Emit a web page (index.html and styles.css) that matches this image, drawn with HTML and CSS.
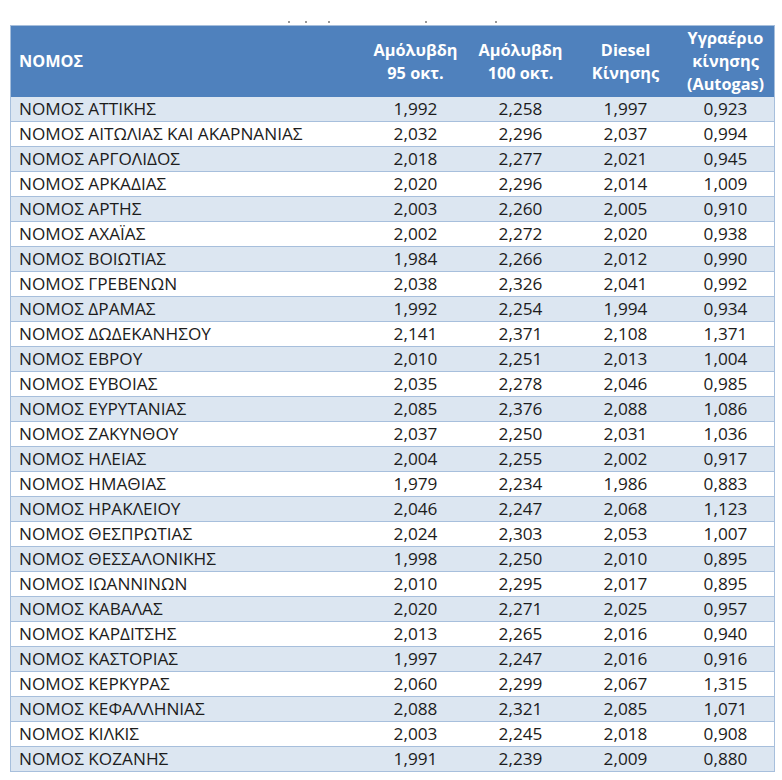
FILE: index.html
```html
<!DOCTYPE html>
<html lang="el">
<head>
<meta charset="utf-8">
<title>Τιμές καυσίμων ανά νομό</title>
<link rel="stylesheet" href="styles.css">
</head>
<body>
<div class="page">
  <div class="specks"><span class="s1"></span><span class="s2"></span><span class="s3"></span><span class="s4"></span><span class="s5"></span></div>
  <table class="prices">
    <thead>
      <tr>
        <th class="name">ΝΟΜΟΣ</th>
        <th>Αμόλυβδη<br>95 οκτ.</th>
        <th>Αμόλυβδη<br>100 οκτ.</th>
        <th>Diesel<br>Κίνησης</th>
        <th>Υγραέριο<br>κίνησης<br>(Autogas)</th>
      </tr>
    </thead>
    <tbody>
      <tr><td class="name">ΝΟΜΟΣ ΑΤΤΙΚΗΣ</td><td>1,992</td><td>2,258</td><td>1,997</td><td>0,923</td></tr>
      <tr><td class="name">ΝΟΜΟΣ ΑΙΤΩΛΙΑΣ ΚΑΙ ΑΚΑΡΝΑΝΙΑΣ</td><td>2,032</td><td>2,296</td><td>2,037</td><td>0,994</td></tr>
      <tr><td class="name">ΝΟΜΟΣ ΑΡΓΟΛΙΔΟΣ</td><td>2,018</td><td>2,277</td><td>2,021</td><td>0,945</td></tr>
      <tr><td class="name">ΝΟΜΟΣ ΑΡΚΑΔΙΑΣ</td><td>2,020</td><td>2,296</td><td>2,014</td><td>1,009</td></tr>
      <tr><td class="name">ΝΟΜΟΣ ΑΡΤΗΣ</td><td>2,003</td><td>2,260</td><td>2,005</td><td>0,910</td></tr>
      <tr><td class="name">ΝΟΜΟΣ ΑΧΑΪΑΣ</td><td>2,002</td><td>2,272</td><td>2,020</td><td>0,938</td></tr>
      <tr><td class="name">ΝΟΜΟΣ ΒΟΙΩΤΙΑΣ</td><td>1,984</td><td>2,266</td><td>2,012</td><td>0,990</td></tr>
      <tr><td class="name">ΝΟΜΟΣ ΓΡΕΒΕΝΩΝ</td><td>2,038</td><td>2,326</td><td>2,041</td><td>0,992</td></tr>
      <tr><td class="name">ΝΟΜΟΣ ΔΡΑΜΑΣ</td><td>1,992</td><td>2,254</td><td>1,994</td><td>0,934</td></tr>
      <tr><td class="name">ΝΟΜΟΣ ΔΩΔΕΚΑΝΗΣΟΥ</td><td>2,141</td><td>2,371</td><td>2,108</td><td>1,371</td></tr>
      <tr><td class="name">ΝΟΜΟΣ ΕΒΡΟΥ</td><td>2,010</td><td>2,251</td><td>2,013</td><td>1,004</td></tr>
      <tr><td class="name">ΝΟΜΟΣ ΕΥΒΟΙΑΣ</td><td>2,035</td><td>2,278</td><td>2,046</td><td>0,985</td></tr>
      <tr><td class="name">ΝΟΜΟΣ ΕΥΡΥΤΑΝΙΑΣ</td><td>2,085</td><td>2,376</td><td>2,088</td><td>1,086</td></tr>
      <tr><td class="name">ΝΟΜΟΣ ΖΑΚΥΝΘΟΥ</td><td>2,037</td><td>2,250</td><td>2,031</td><td>1,036</td></tr>
      <tr><td class="name">ΝΟΜΟΣ ΗΛΕΙΑΣ</td><td>2,004</td><td>2,255</td><td>2,002</td><td>0,917</td></tr>
      <tr><td class="name">ΝΟΜΟΣ ΗΜΑΘΙΑΣ</td><td>1,979</td><td>2,234</td><td>1,986</td><td>0,883</td></tr>
      <tr><td class="name">ΝΟΜΟΣ ΗΡΑΚΛΕΙΟΥ</td><td>2,046</td><td>2,247</td><td>2,068</td><td>1,123</td></tr>
      <tr><td class="name">ΝΟΜΟΣ ΘΕΣΠΡΩΤΙΑΣ</td><td>2,024</td><td>2,303</td><td>2,053</td><td>1,007</td></tr>
      <tr><td class="name">ΝΟΜΟΣ ΘΕΣΣΑΛΟΝΙΚΗΣ</td><td>1,998</td><td>2,250</td><td>2,010</td><td>0,895</td></tr>
      <tr><td class="name">ΝΟΜΟΣ ΙΩΑΝΝΙΝΩΝ</td><td>2,010</td><td>2,295</td><td>2,017</td><td>0,895</td></tr>
      <tr><td class="name">ΝΟΜΟΣ ΚΑΒΑΛΑΣ</td><td>2,020</td><td>2,271</td><td>2,025</td><td>0,957</td></tr>
      <tr><td class="name">ΝΟΜΟΣ ΚΑΡΔΙΤΣΗΣ</td><td>2,013</td><td>2,265</td><td>2,016</td><td>0,940</td></tr>
      <tr><td class="name">ΝΟΜΟΣ ΚΑΣΤΟΡΙΑΣ</td><td>1,997</td><td>2,247</td><td>2,016</td><td>0,916</td></tr>
      <tr><td class="name">ΝΟΜΟΣ ΚΕΡΚΥΡΑΣ</td><td>2,060</td><td>2,299</td><td>2,067</td><td>1,315</td></tr>
      <tr><td class="name">ΝΟΜΟΣ ΚΕΦΑΛΛΗΝΙΑΣ</td><td>2,088</td><td>2,321</td><td>2,085</td><td>1,071</td></tr>
      <tr><td class="name">ΝΟΜΟΣ ΚΙΛΚΙΣ</td><td>2,003</td><td>2,245</td><td>2,018</td><td>0,908</td></tr>
      <tr><td class="name">ΝΟΜΟΣ ΚΟΖΑΝΗΣ</td><td>1,991</td><td>2,239</td><td>2,009</td><td>0,880</td></tr>
    </tbody>
  </table>
</div>
</body>
</html>
```
FILE: styles.css
```css
html, body {
  margin: 0;
  padding: 0;
  background: #ffffff;
}

.page {
  padding: 20px 0 0 10px;
  font-family: "Open Sans", "Noto Sans", "DejaVu Sans", sans-serif;
  color: #1c1c1c;
}

.specks {
  position: relative;
  height: 5px;
  width: 763px;
}

.specks span {
  position: absolute;
  top: 1px;
  width: 2px;
  height: 2px;
  border-radius: 1px;
  background: #777777;
}
.specks .s1 { left: 278px; }
.specks .s2 { left: 295px; }
.specks .s3 { left: 318px; }
.specks .s4 { left: 415px; }
.specks .s5 { left: 485px; }

.prices {
  border-collapse: collapse;
  width: 765px;
  table-layout: fixed;
  border: 1px solid #a7bfdc;
}

.prices th {
  background: #4f81bd;
  color: #ffffff;
  font-weight: 700;
  font-size: 16.3px;
  line-height: 23px;
  height: 71px;
  padding: 0;
  text-align: center;
  vertical-align: middle;
}

.prices th:nth-child(1) { width: 345px; }
.prices th:nth-child(2) { width: 103px; }
.prices th:nth-child(3) { width: 107px; }
.prices th:nth-child(4) { width: 103px; }

.prices th.name {
  text-align: left;
  padding-left: 8px;
}

.prices td {
  height: 24px;
  padding: 0;
  font-size: 17.2px;
  line-height: 24px;
  text-align: center;
  border-bottom: 1px solid #a7bfdc;
  white-space: nowrap;
}

.prices td.name {
  text-align: left;
  padding-left: 8px;
}

.prices tbody tr:nth-child(odd) td {
  background: #dce6f1;
}
```
